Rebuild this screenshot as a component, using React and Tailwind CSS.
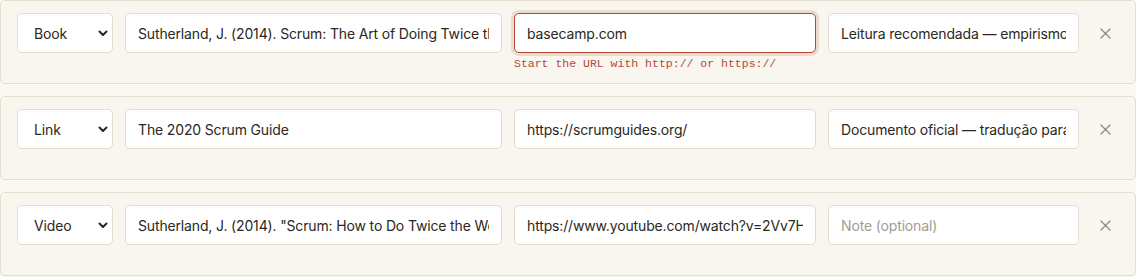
import React from "react";

const rows = [
  {
    type: "Book",
    title: "Sutherland, J. (2014). Scrum: The Art of Doing Twice the Work in Half the Time",
    url: "basecamp.com",
    note: "Leitura recomendada — empirismo e transparência",
    error: "Start the URL with http:// or https://",
  },
  {
    type: "Link",
    title: "The 2020 Scrum Guide",
    url: "https://scrumguides.org/",
    note: "Documento oficial — tradução para português",
  },
  {
    type: "Video",
    title: 'Sutherland, J. (2014). "Scrum: How to Do Twice the Work in Half the Time"',
    url: "https://www.youtube.com/watch?v=2Vv7HbQ",
    note: "",
  },
];

function Chevron() {
  return (
    <svg
      width="10"
      height="7"
      viewBox="0 0 10 7"
      className="pointer-events-none absolute right-[5px] top-[17px]"
    >
      <path d="M1.5 1.5 L5 5 L8.5 1.5" fill="none" stroke="#2a2622" strokeWidth="2" strokeLinecap="round" strokeLinejoin="round" />
    </svg>
  );
}

const inputBase =
  "h-10 w-full rounded-[5px] border bg-white px-3 text-[14px] tracking-[-0.15px] text-[#2b2723] outline-none placeholder:text-[#a39d94]";

export default function App() {
  return (
    <div className="min-h-[277px] bg-[#faf8f3] font-['Inter',sans-serif]">
      <div className="flex flex-col gap-3">
        {rows.map((r, i) => (
          <div
            key={i}
            className="rounded-[5px] border border-[#e6ddcd] bg-[#f9f6f0] px-4 pt-3 pb-3"
          >
            <div className="grid grid-cols-[96px_377px_302px_251px_28px] items-start gap-x-3">
              <div className="relative h-10">
                <select
                  defaultValue={r.type}
                  className="h-10 w-full appearance-none rounded-[5px] border border-[#e3dccf] bg-white pl-4 pr-6 text-[14px] tracking-[-0.15px] text-[#2b2723] outline-none"
                >
                  <option>Book</option>
                  <option>Link</option>
                  <option>Video</option>
                </select>
                <Chevron />
              </div>
              <input readOnly value={r.title} className={inputBase + " border-[#e3dccf]"} />
              <div className="flex flex-col">
                <input
                  readOnly
                  value={r.url}
                  className={
                    inputBase +
                    (r.error
                      ? " border-[#b5472f] ring-[3px] ring-[#ecdbd1]"
                      : " border-[#e3dccf]")
                  }
                />
                <div className="h-[18px]">
                  {r.error && (
                    <div className="mt-1 font-['Liberation_Mono',monospace] text-[11.5px] leading-[14px] text-[#b5473a]">
                      {r.error}
                    </div>
                  )}
                </div>
              </div>
              <input
                readOnly
                value={r.note}
                placeholder="Note (optional)"
                className={inputBase + " border-[#e3dccf]"}
              />
              <button className="flex h-10 w-7 items-center justify-center text-[#8c877f]">
                <svg width="11" height="11" viewBox="0 0 11 11">
                  <path d="M1 1 L10 10 M10 1 L1 10" stroke="currentColor" strokeWidth="1.3" strokeLinecap="round" />
                </svg>
              </button>
            </div>
          </div>
        ))}
      </div>
    </div>
  );
}
